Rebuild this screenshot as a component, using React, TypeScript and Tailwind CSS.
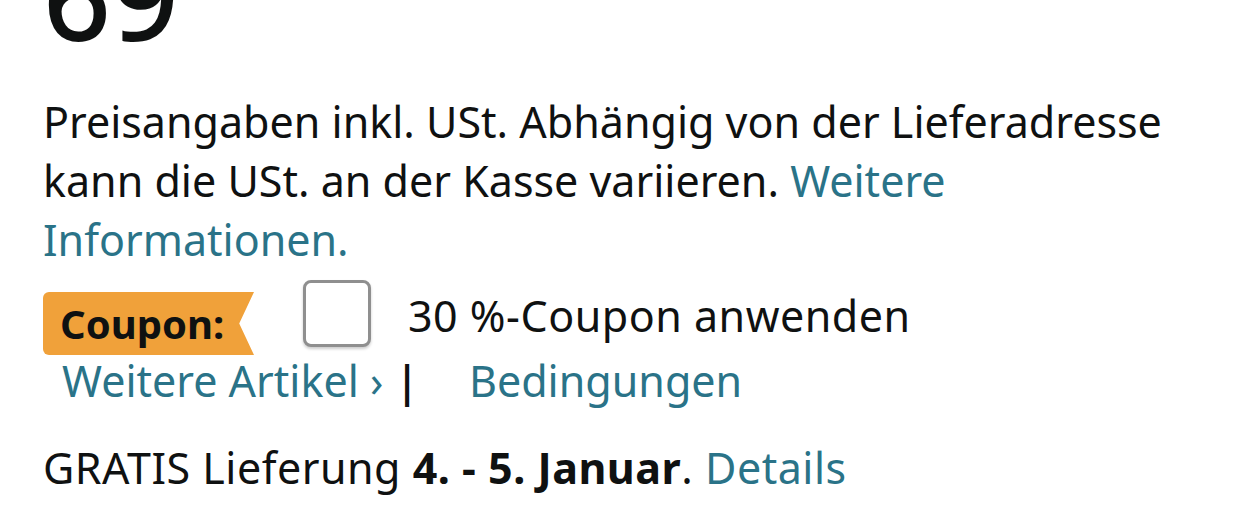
import React from "react"

const font = { fontFamily: '"Noto Sans", Arial, sans-serif' }

export default function App() {
    return (
        <div className="h-[527px] w-[1242px] overflow-hidden bg-white text-[#0f1111]" style={font}>
            <div className="pl-[43px]">
                {/* Price tail, cut off at the top */}
                <div className="flex h-[92px] flex-col">
                    <div className="-mt-[64px] text-[119px] font-medium leading-none">69</div>
                </div>

                <p className="w-[1170px] text-[43px] leading-[59px]">
                    Preisangaben inkl. USt. Abhängig von der Lieferadresse kann die USt. an der Kasse variieren.{" "}
                    <a className="text-[#2a7388]">Weitere Informationen.</a>
                </p>

                <div className="mt-[11px] flex items-start">
                    <div
                        className="mt-[12px] h-[63px] w-[211px] rounded-l-[6px] bg-[#f0a13a] pl-[17px] text-[40px] font-bold leading-[63px]"
                        style={{ clipPath: "polygon(0 0, 100% 0, 93% 50%, 100% 100%, 0 100%)" }}
                    >
                        Coupon:
                    </div>
                    <div className="ml-[49px] h-[67px] w-[68px] rounded-[8px] border-[3px] border-[#8f8f8f] bg-white shadow-[0_2px_3px_rgba(0,0,0,0.2)]" />
                    <span className="ml-[37px] mt-[11px] text-[43px] leading-[50px] tracking-[0.5px]">30 %-Coupon anwenden</span>
                </div>

                <div className="mt-[1px] flex items-center pl-[19px] text-[43px] leading-[50px]">
                    <a className="text-[#2a7388]">Weitere Artikel ›</a>
                    <span className="ml-[12px] font-semibold">|</span>
                    <a className="ml-[50px] text-[#2a7388]">Bedingungen</a>
                </div>

                <p className="mt-[37px] text-[43px] leading-[50px] tracking-[0.5px]">
                    GRATIS Lieferung <b>4. - 5. Januar</b>. <a className="text-[#2a7388]">Details</a>
                </p>
            </div>
        </div>
    )
}
